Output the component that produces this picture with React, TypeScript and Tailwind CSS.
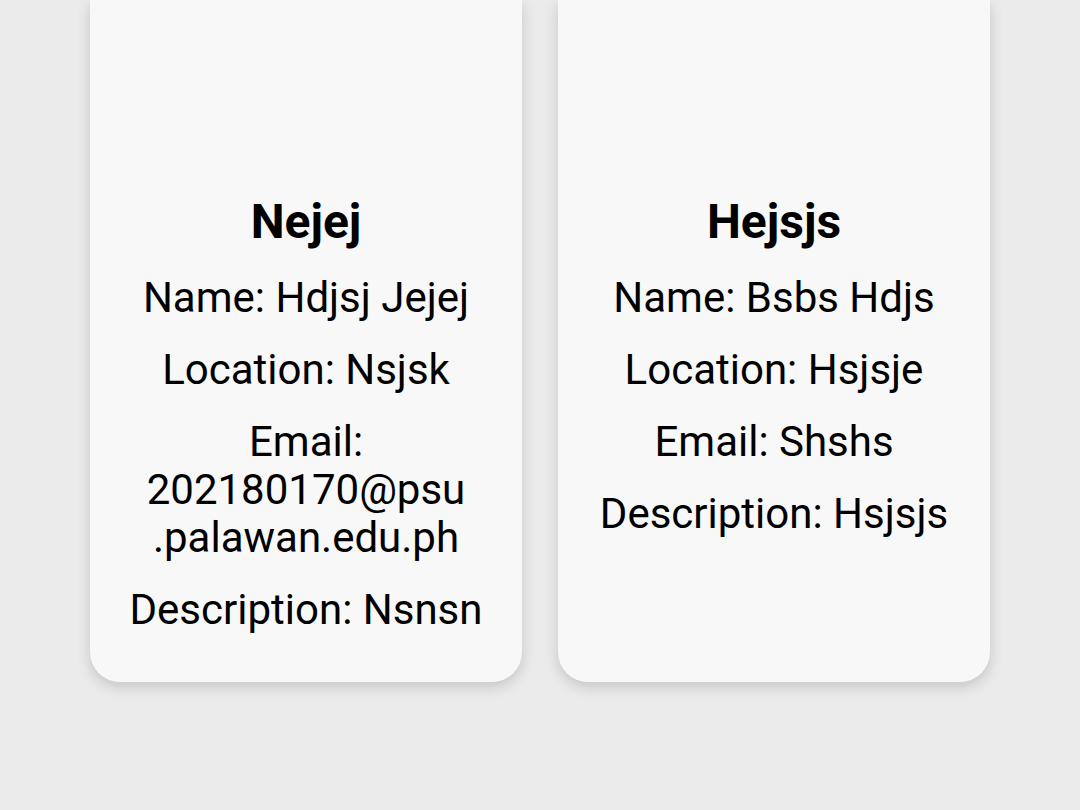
import React from "react";

interface Entry {
  title: string;
  name: string;
  location: string;
  email: React.ReactNode;
  description: string;
}

const entries: Entry[] = [
  {
    title: "Nejej",
    name: "Hdjsj Jejej",
    location: "Nsjsk",
    email: (
      <>
        202180170@psu
        <wbr />
        .palawan.edu.ph
      </>
    ),
    description: "Nsnsn",
  },
  {
    title: "Hejsjs",
    name: "Bsbs Hdjs",
    location: "Hsjsje",
    email: "Shshs",
    description: "Hsjsjs",
  },
];

export default function App() {
  return (
    <div
      className="min-h-[810px] w-full bg-[#ebebeb] px-[90px]"
      style={{ fontFamily: "Roboto, 'Noto Sans', sans-serif" }}
    >
      <div className="grid grid-cols-2 gap-[36px]">
        {entries.map((e) => (
          <div
            key={e.title}
            className="flex flex-col items-center rounded-b-[30px] bg-[#f8f8f8] px-6 pb-[48px] text-center text-black shadow-[0_5px_14px_rgba(0,0,0,0.16)]"
          >
            {/* image area above the title, scrolled off */}
            <div className="h-[194px] w-full" />
            <h2 className="text-[48px] font-bold leading-[56px]">{e.title}</h2>
            <p className="mt-6 text-[42px] leading-[48px]">Name: {e.name}</p>
            <p className="mt-6 text-[42px] leading-[48px]">Location: {e.location}</p>
            <p className="mt-6 text-[42px] leading-[48px]">Email: {e.email}</p>
            <p className="mt-6 text-[42px] leading-[48px]">Description: {e.description}</p>
          </div>
        ))}
      </div>
    </div>
  );
}
